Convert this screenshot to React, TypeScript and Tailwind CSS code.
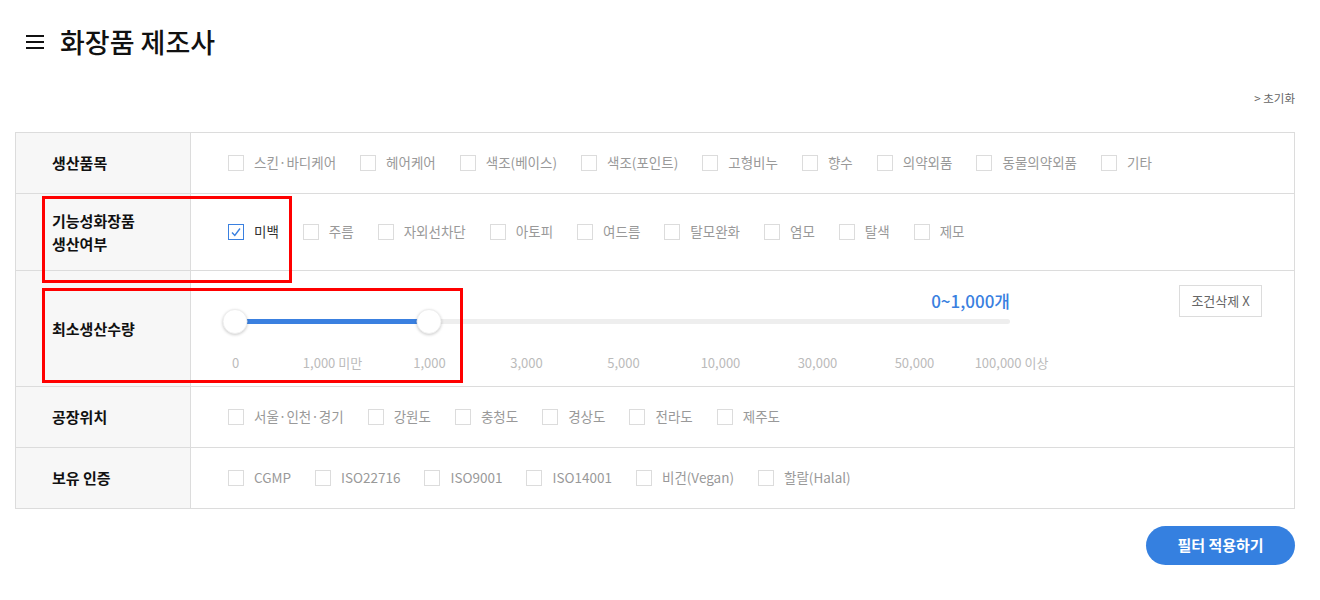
import { useState } from "react"

const FONT = { fontFamily: '"Noto Sans CJK KR", "Noto Sans", sans-serif' }

const ticks = ["0", "1,000 미만", "1,000", "3,000", "5,000", "10,000", "30,000", "50,000", "100,000 이상"]

function CheckItem({ label, checked = false }: { label: string; checked?: boolean }) {
  return (
    <label className="flex items-center gap-[10px]">
      <span
        className={
          checked
            ? "flex h-[16px] w-[16px] items-center justify-center border border-[#3a80e0] bg-white"
            : "h-[16px] w-[16px] border border-[#dcdcdc] bg-white"
        }
      >
        {checked && (
          <svg viewBox="0 0 12 12" className="h-[12px] w-[12px]">
            <path d="M2 6.5 L4.8 9.5 L10 2.5" fill="none" stroke="#3a80e0" strokeWidth="1.4" />
          </svg>
        )}
      </span>
      <span className={checked ? "text-[13.5px] text-[#333]" : "text-[13.5px] text-[#999]"}>{label}</span>
    </label>
  )
}

function Row({ label, children, h, top = false }: { label: React.ReactNode; children: React.ReactNode; h: string; top?: boolean }) {
  return (
    <div className={`flex border-b border-[#dcdcdc] last:border-b-0 ${h}`}>
      <div className="flex w-[175px] shrink-0 items-center border-r border-[#dcdcdc] bg-[#f7f7f7] pl-[36px] text-[15px] font-bold leading-[23px] text-[#111]">
        {label}
      </div>
      <div className={top ? "flex flex-1 items-start pl-[37px]" : "flex flex-1 items-center pl-[37px]"}>{children}</div>
    </div>
  )
}

function Items({ list, checked = [] }: { list: string[]; checked?: string[] }) {
  return (
    <div className="flex items-center gap-[24px]">
      {list.map((l) => (
        <CheckItem key={l} label={l} checked={checked.includes(l)} />
      ))}
    </div>
  )
}

export default function App() {
  const [range] = useState({ from: 0, to: 2 })
  const step = 97

  return (
    <div className="min-h-[600px] bg-white pl-[15px] pr-[25px] pt-[22px]" style={FONT}>
      <div className="flex items-center gap-[16px] pl-[11px]">
        <svg viewBox="0 0 18 14" className="h-[14px] w-[18px]">
          <rect x="0" y="0" width="18" height="2" fill="#111" />
          <rect x="0" y="6" width="18" height="2" fill="#111" />
          <rect x="0" y="12" width="18" height="2" fill="#111" />
        </svg>
        <h1 className="text-[27px] font-medium text-[#111]">화장품 제조사</h1>
      </div>

      <div className="mt-[27px] flex justify-end text-[11.5px] leading-[16px] text-[#666]">&gt; 초기화</div>

      <div className="relative mt-[26px]">
        <div className="pointer-events-none absolute left-[27px] top-[64px] z-10 h-[87px] w-[250px] border-[3px] border-[#ff0000]" />
        <div className="pointer-events-none absolute left-[27px] top-[156px] z-10 h-[95px] w-[421px] border-[3px] border-[#ff0000]" />

        <div className="border border-[#dcdcdc]">
          <Row label="생산품목" h="h-[61px]">
            <Items list={["스킨·바디케어", "헤어케어", "색조(베이스)", "색조(포인트)", "고형비누", "향수", "의약외품", "동물의약외품", "기타"]} />
          </Row>
          <Row
            label={
              <div>
                기능성화장품
                <br />
                생산여부
              </div>
            }
            h="h-[77px]"
          >
            <Items list={["미백", "주름", "자외선차단", "아토피", "여드름", "탈모완화", "염모", "탈색", "제모"]} checked={["미백"]} />
          </Row>
          <Row label="최소생산수량" h="h-[116px]" top>
            <div className="ml-[7px] w-[775px] pt-[17px]">
              <div className="mb-[6px] text-right text-[17px] font-medium leading-[25px] text-[#3a80e0]">0~1,000개</div>
              <div className="relative h-[5px] rounded-full bg-[#eeeeee]">
                <div
                  className="absolute top-0 h-[5px] bg-[#3a80e0]"
                  style={{ left: range.from * step, width: (range.to - range.from) * step }}
                />
                <span
                  className="absolute top-[-10px] h-[25px] w-[25px] -translate-x-1/2 rounded-full border border-[#eee] bg-white shadow-[0_1px_3px_rgba(0,0,0,0.2)]"
                  style={{ left: range.from * step }}
                />
                <span
                  className="absolute top-[-10px] h-[25px] w-[25px] -translate-x-1/2 rounded-full border border-[#eee] bg-white shadow-[0_1px_3px_rgba(0,0,0,0.2)]"
                  style={{ left: range.to * step }}
                />
              </div>
              <div className="-ml-[48px] mt-[29px] grid w-[873px] grid-cols-9 text-center text-[13px] leading-[20px] text-[#bbb]">
                {ticks.map((t) => (
                  <span key={t}>{t}</span>
                ))}
              </div>
            </div>
            <button className="ml-[169px] mt-[14px] h-[32px] w-[83px] border border-[#dcdcdc] text-[13px] text-[#666]">
              조건삭제 X
            </button>
          </Row>
          <Row label="공장위치" h="h-[61px]">
            <Items list={["서울·인천·경기", "강원도", "충청도", "경상도", "전라도", "제주도"]} />
          </Row>
          <Row label="보유 인증" h="h-[60px]">
            <Items list={["CGMP", "ISO22716", "ISO9001", "ISO14001", "비건(Vegan)", "할랄(Halal)"]} />
          </Row>
        </div>
      </div>

      <div className="mt-[17px] flex justify-end">
        <button className="h-[39px] w-[149px] rounded-full bg-[#3580e0] text-[15px] font-bold text-white">필터 적용하기</button>
      </div>
    </div>
  )
}
